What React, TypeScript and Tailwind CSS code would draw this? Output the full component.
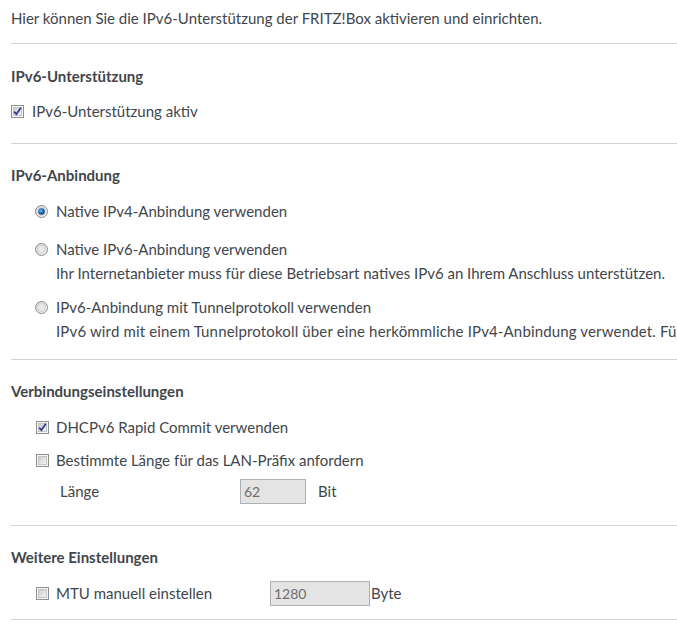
import React from "react";

function Checkbox({ checked }: { checked?: boolean }) {
  return (
    <svg width="13" height="13" viewBox="0 0 13 13" className="shrink-0">
      <defs>
        <linearGradient id="cbg" x1="0" y1="0" x2="1" y2="1">
          <stop offset="0" stopColor="#cbcbcb" />
          <stop offset="1" stopColor="#f5f5f5" />
        </linearGradient>
      </defs>
      <rect x="0.5" y="0.5" width="12" height="12" fill="#f6f6f6" stroke="#8e8f8f" />
      <rect x="2.5" y="2.5" width="8" height="8" fill="url(#cbg)" stroke="#c4c4c4" />
      {checked && (
        <path d="M3.2 6.6 L5.4 9.2 L9.8 2.8" fill="none" stroke="#26349b" strokeWidth="1.7" />
      )}
    </svg>
  );
}

function Radio({ checked }: { checked?: boolean }) {
  return (
    <svg width="13" height="13" viewBox="0 0 13 13" className="shrink-0">
      <defs>
        <linearGradient id="rbg" x1="0" y1="0" x2="1" y2="1">
          <stop offset="0" stopColor="#d4d4d4" />
          <stop offset="1" stopColor="#fafafa" />
        </linearGradient>
        <radialGradient id="rdot" cx="0.4" cy="0.4" r="0.6">
          <stop offset="0" stopColor="#6fc3f5" />
          <stop offset="0.6" stopColor="#1a6bb5" />
          <stop offset="1" stopColor="#0d3e73" />
        </radialGradient>
      </defs>
      <circle cx="6.5" cy="6.5" r="6" fill="url(#rbg)" stroke="#8c8c8c" />
      <circle cx="6.5" cy="6.5" r="4" fill="#e9e9e9" stroke="#c8c8c8" strokeWidth="0.8" />
      {checked && <circle cx="6.5" cy="6.5" r="3.2" fill="url(#rdot)" />}
    </svg>
  );
}

const Hr = ({ className = "" }: { className?: string }) => (
  <div className={"h-px bg-[#d4d4d4] " + className} />
);

export default function App() {
  return (
    <div
      className="w-[677px] h-[636px] overflow-hidden bg-white pl-[11px] pt-[6px] text-[15px] text-[#3f464c]"
      style={{ fontFamily: "Lato, 'Noto Sans', sans-serif" }}
    >
      <p className="h-[24px] leading-[24px] whitespace-nowrap">
        Hier können Sie die IPv6-Unterstützung der FRITZ!Box aktivieren und einrichten.
      </p>
      <Hr className="mt-[13px]" />

      <h2 className="mt-[20px] h-[24px] leading-[24px] font-bold">IPv6-Unterstützung</h2>
      <div className="mt-[11px] h-[24px] flex items-center gap-[8px]">
        <Checkbox checked />
        <span>IPv6-Unterstützung aktiv</span>
      </div>
      <Hr className="mt-[20px]" />

      <h2 className="mt-[19px] h-[24px] leading-[24px] font-bold">IPv6-Anbindung</h2>
      <div className="pl-[24px]">
        <div className="mt-[12px] h-[24px] flex items-center gap-[8px]">
          <Radio checked />
          <span>Native IPv4-Anbindung verwenden</span>
        </div>
        <div className="mt-[14px] h-[24px] flex items-center gap-[8px]">
          <Radio />
          <span>Native IPv6-Anbindung verwenden</span>
        </div>
        <p className="pl-[21px] h-[24px] leading-[24px] whitespace-nowrap">
          Ihr Internetanbieter muss für diese Betriebsart natives IPv6 an Ihrem Anschluss unterstützen.
        </p>
        <div className="mt-[10px] h-[24px] flex items-center gap-[8px]">
          <Radio />
          <span>IPv6-Anbindung mit Tunnelprotokoll verwenden</span>
        </div>
        <p className="pl-[21px] h-[24px] leading-[24px] whitespace-nowrap tracking-[0.15px]">
          IPv6 wird mit einem Tunnelprotokoll über eine herkömmliche IPv4-Anbindung verwendet. Für
        </p>
      </div>
      <Hr className="mt-[16px]" />

      <h2 className="mt-[19px] h-[24px] leading-[24px] font-bold">Verbindungseinstellungen</h2>
      <div className="pl-[25px]">
        <div className="mt-[12px] h-[24px] flex items-center gap-[7px]">
          <Checkbox checked />
          <span>DHCPv6 Rapid Commit verwenden</span>
        </div>
        <div className="mt-[9px] h-[24px] flex items-center gap-[7px]">
          <Checkbox />
          <span>Bestimmte Länge für das LAN-Präfix anfordern</span>
        </div>
        <div className="mt-[7px] h-[25px] flex items-center">
          <span className="w-[204px] pl-[24px]">Länge</span>
          <div className="w-[66px] h-[25px] border border-[#a9b1b9] bg-[#e4e4e4] flex items-center pl-[3px] text-[#6e6e6e] text-[14px]">
            62
          </div>
          <span className="ml-[12px]">Bit</span>
        </div>
      </div>
      <Hr className="mt-[21px]" />

      <h2 className="mt-[19px] h-[24px] leading-[24px] font-bold">Weitere Einstellungen</h2>
      <div className="pl-[25px] mt-[12px] h-[25px] flex items-center">
        <div className="w-[234px] flex items-center gap-[7px]">
          <Checkbox />
          <span>MTU manuell einstellen</span>
        </div>
        <div className="w-[100px] h-[25px] border border-[#a9b1b9] bg-[#e4e4e4] flex items-center pl-[3px] text-[#6e6e6e] text-[14px]">
          1280
        </div>
        <span className="ml-[1px]">Byte</span>
      </div>
      <Hr className="mt-[13px]" />
    </div>
  );
}
